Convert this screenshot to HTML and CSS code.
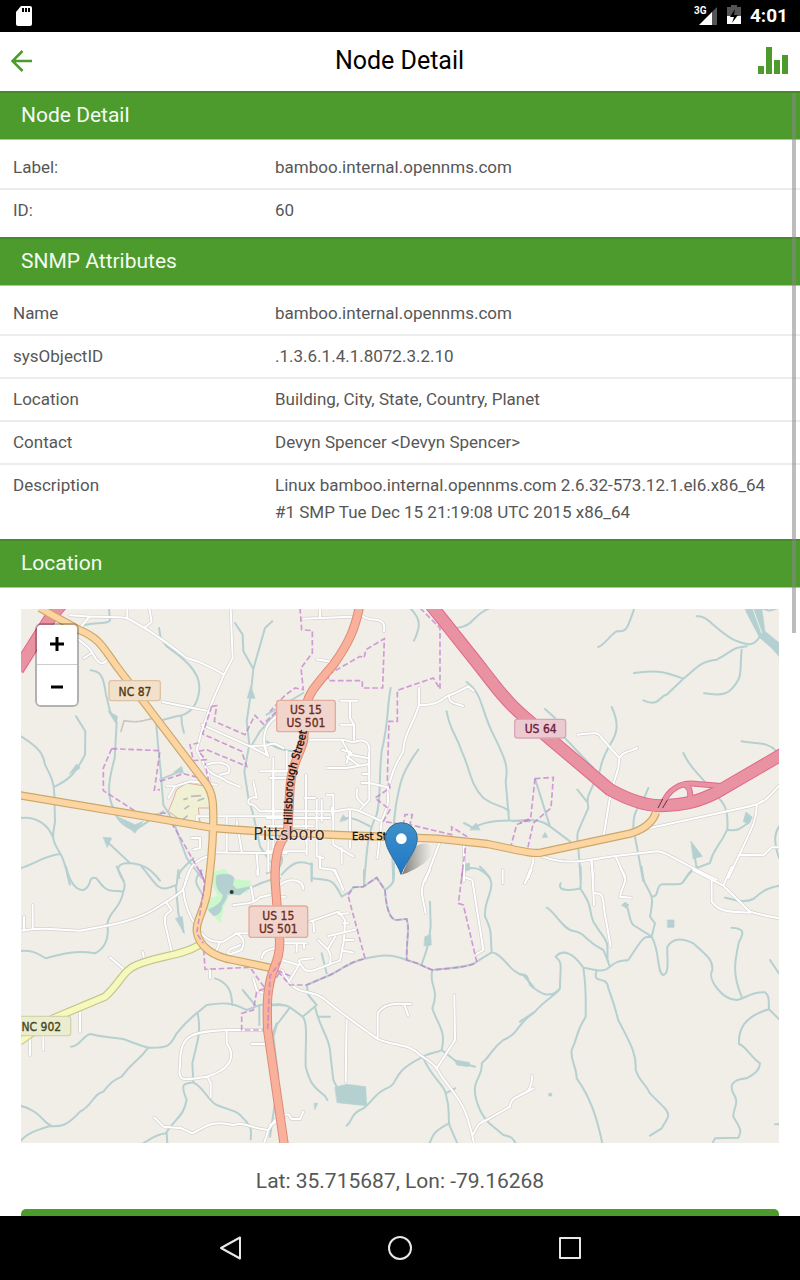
FILE: index.html
```html
<!DOCTYPE html>
<html lang="en">
<head>
<meta charset="utf-8">
<meta name="viewport" content="width=device-width, initial-scale=1">
<title>Node Detail</title>
<link rel="stylesheet" href="styles.css">
</head>
<body>
<div class="status-bar">
  <svg class="sd-card" viewBox="0 0 16 20" width="16" height="20" aria-hidden="true"><path fill="#fff" d="M5 0H14Q16 0 16 2V18Q16 20 14 20H2Q0 20 0 18V6Z"/><path d="M6 2h2v4H6zM9 2h2v4H9zM12 2h2v4h-2z"/></svg>
  <div class="status-icons">
    <svg viewBox="0 0 24 20" width="24" height="20" aria-hidden="true"><path fill="#fff" d="M5 20 18 7V20Z"/><path fill="#555" d="M18 7 23 2V20H18Z"/><text class="net" x="0" y="9">3G</text></svg>
    <svg viewBox="0 0 14 20" width="14" height="20" aria-hidden="true"><path fill="#555" d="M4 0H10V2H14V11H0V2H4Z"/><path fill="#fff" d="M0 11H14V19H0Z"/><path d="M8 4 3 12H7L5 18 11 10H7Z"/></svg>
    <span class="clock">4:01</span>
  </div>
</div>

<header class="toolbar">
  <button class="icon-button" aria-label="Back"><svg viewBox="0 0 22 22" width="22" height="22"><path fill="none" stroke="#4d9b2d" stroke-width="2.6" d="M21 11H2.500M11.500 1 1.500 11 11.500 21"/></svg></button>
  <h1>Node Detail</h1>
  <button class="icon-button" aria-label="Graphs"><svg viewBox="0 0 30 27" width="30" height="27"><path fill="#4d9b2d" d="M0 19h6v8H0zM8 0h6v27H8zM16 13h6v14h-6zM24 8h6v19h-6z"/></svg></button>
</header>

<main class="content">
  <section>
    <h2>Node Detail</h2>
    <table>
      <tr><th scope="row">Label:</th><td>bamboo.internal.opennms.com</td></tr>
      <tr><th scope="row">ID:</th><td>60</td></tr>
    </table>
  </section>
  <section>
    <h2>SNMP Attributes</h2>
    <table>
      <tr><th scope="row">Name</th><td>bamboo.internal.opennms.com</td></tr>
      <tr><th scope="row">sysObjectID</th><td>.1.3.6.1.4.1.8072.3.2.10</td></tr>
      <tr><th scope="row">Location</th><td>Building, City, State, Country, Planet</td></tr>
      <tr><th scope="row">Contact</th><td>Devyn Spencer &lt;Devyn Spencer&gt;</td></tr>
      <tr><th scope="row">Description</th><td>Linux bamboo.internal.opennms.com 2.6.32-573.12.1.el6.x86_64 #1 SMP Tue Dec 15 21:19:08 UTC 2015 x86_64</td></tr>
    </table>
  </section>
  <section>
    <h2>Location</h2>
    <div class="location">
      <div class="map">
        <svg class="map-canvas" viewBox="0 0 2274 1602" role="img" aria-label="Map of Pittsboro">
          <defs>
            <g id="minor">
              <g transform="translate(-3 -3)">
                <path d="M150 22C250 30 280 25 320 30C380 60 430 95 500 150C540 160 570 175 612 200L638 150 632 0M612 200 575 285 545 370 530 425C560 480 570 500 570 550M180 60 205 30M322 30V0M372 60 395 42 388 0M175 95C210 120 215 130 220 140C240 175 250 170 268 150M215 135 192 150M428 282 560 308"/>
                <path d="M545 350 690 415C720 430 740 440 745 445L735 415C760 400 770 410 790 420M690 415 735 412M560 470C600 455 640 470 625 495L600 500M560 480C580 510 600 500 620 520L660 537M440 535H465L510 520 590 530M465 535 445 570M530 650V625H800M620 625V730M650 640 665 730M580 733 710 735 715 800M710 735H800M745 700V790M580 740C520 755 505 780 495 830M515 690H540V720L520 725M700 520 710 570C690 560 670 590 700 590L720 610H800M720 490H800M760 490V625M780 320C740 340 720 380 740 440"/>
              </g>
              <g transform="translate(747 -3)">
                <path d="M100 32 150 30 280 25C300 45 350 20 342 70M150 30V0M140 154 185 162M212 278H262M240 278V330L252 350V395M212 350H250M120 395H215C240 395 240 410 265 398C300 395 300 420 297 440L298 575 270 605M215 395 240 440 292 450M215 425 245 435M230 465 240 430 M230 445 270 475M172 480H230L298 468M278 498H298M275 525H298L350 537M262 543C255 570 265 575 280 590"/>
                <path d="M447 240V290C430 350 400 380 400 430C370 480 365 500 352 550C360 590 345 610 335 640L322 750M447 292C500 290 510 280 530 265C560 255 575 245 595 235L610 248M537 262C535 290 560 285 580 295M-10 610H200C250 595 260 605 335 640M-10 630H180M0 490H70M0 510H60M50 430V490M10 450V730M108 500V700M105 570H135M140 575V745L160 750M170 560H190V710L250 745M215 720V765M185 600 190 640M-10 655H130M-10 730H110M110 690V740M240 610V720M150 745V780L190 785 210 820M155 575V640M510 700 465 820M582 700V820"/>
              </g>
              <g transform="translate(1497 -3)">
                <path d="M172 380C220 375 235 370 245 390L298 450 295 480 272 555 250 690M298 450C310 430 320 435 352 420M380 662 690 595C740 585 755 555 790 520M710 590C712 640 690 670 625 810M655 740 730 742 755 718H790M40 740V760L25 810M65 745C150 775 200 755 280 745L410 730C440 730 470 760 590 815M213 755 220 810M287 745 315 810"/>
              </g>
              <g transform="translate(-3 783)">
                <path d="M0 182C80 170 100 180 180 182C280 165 350 150 400 120C470 75 490 70 495 40L510 0M12 140V182M38 105V178M490 60C495 120 520 160 545 190C570 220 590 215 610 215L650 190C680 210 670 225 665 240L625 255C620 230 650 235 660 225M590 240 600 215M645 190H700M437 95 455 120C430 140 435 140 435 160L455 245M270 262 312 298M368 245 372 265M180 425V485M30 500V555M70 500V540M735 480H620C500 485 480 500 480 590C470 640 500 630 560 620C630 600 650 560 620 520V480M562 620 572 640V682M403 743 430 770 485 775 517 790C560 770 570 750 640 765C680 755 690 775 745 780L765 750M745 780 732 820M570 300V325M700 325 710 360 730 370M640 105C690 100 700 100 720 82L750 75M693 50 700 90M725 265C730 240 745 240 765 235M695 522H735M712 0V15"/>
              </g>
              <g transform="translate(747 783)">
                <path d="M30 45C60 20 100 30 100 58M20 80H45M195 0 220 60M120 155 205 125 225 150 222 210 210 272C150 290 130 310 105 300C70 260 90 270 130 265M35 270 85 285M90 280 60 330M40 220H110M80 220V245M102 220V235M205 132 235 130M220 160H235M175 198 260 178M145 210C160 230 190 240 180 280M175 235 195 200M222 210H250M220 242 250 248M130 155 132 185"/>
                <path d="M35 300 60 340C90 375 130 360 160 385C200 420 230 440 320 505C370 530 420 520 450 555C490 580 500 590 515 620C570 690 590 710 612 820M230 450 227 635M323 500V430C340 400 380 400 402 402H423M402 402 415 437M553 375 555 510 502 592M608 795C625 770 620 760 650 750L720 710C720 680 750 680 790 655M480 0C440 60 460 80 467 130M580 20 607 30 640 240 620 252M698 0V40M780 0 765 40M0 765 20 755M38 735 55 733 65 747H90L100 725"/>
              </g>
              <g transform="translate(1497 783)">
                <path d="M215-30 222 105M222 70C260 65 245 100 258 150L272 230M300-10C330 40 310 30 300 80L333 83M520 0 610 47 690 125C740 140 760 140 800 150M610 47 635-10M575 30V95C600 130 640 125 690 128M35 0 15 40M0 675C30 665 35 650 37 617"/>
              </g>
            </g>
            <g id="trunk"><path d="M57-3C107 27 127 35 172 62C237 87 247 117 287 172L557 527C577 557 577 587 577 637C575 717 570 780 557 860C540 930 527 930 527 965C532 1013 577 1043 637 1053L755 1078M-10 558 360 620 577 657C700 668 760 668 950 678L1250 689 1400 705C1500 725 1530 735 1560 731L1830 673C1870 660 1895 640 1905 610"/></g>
            <path id="primary" d="M1015-5C1002 57 987 97 937 167C877 237 862 257 857 287L847 397C832 447 812 467 807 537L800 670C775 700 762 730 762 810L775 983C782 1053 750 1080 745 1130Q736 1163 740 1263C757 1383 772 1483 790 1610"/>
            <path id="motorway" d="M1208-40 1237-3 1367 160C1420 228 1450 270 1500 315L1587 390 1767 542C1827 575 1877 590 1917 590C1997 588 2037 575 2087 550L2290 432M-10 182 92 20 135-30M60-20 105 25"/>
            <path id="ramp" d="M1923 590C1940 540 1980 518 2030 525L2110 532M1985 525C2005 530 2010 545 2007 570"/>
            <path id="secondary" d="M-5 1298 97 1228 252 1163C297 1123 307 1083 347 1068C417 1038 477 1043 535 1008"/>
            <path id="street-name" d="M812 647 815 537C820 487 835 447 845 417L862 350"/>
            <linearGradient id="pin" x2="0" y2="1"><stop stop-color="#4091c8"/><stop offset="1" stop-color="#1f76c6"/></linearGradient>
            <linearGradient id="shade"><stop stop-color="#444" stop-opacity=".7"/><stop offset="1" stop-color="#777" stop-opacity="0"/></linearGradient>
          </defs>
          <rect width="2274" height="1602" fill="#f1eee8"/>
          <path class="park" d="M570 790 610 780 640 810 690 815 680 850 625 860 610 890 598 943 575 915 550 895 560 870 590 860 575 830Z"/>
          <path class="school" d="M467 542 497 522 557 532 572 597 532 597 537 640 477 632 442 607 455 575Z"/>
          <path class="school-path" d="M487 572 500 568M510 562 540 560M490 600 505 590M500 620 485 632M530 575 550 568"/>
          <g class="water">
            <g transform="translate(-3 -3)">
              <path d="M190 52C240 40 260 50 270 38L267 0M417 60 422 90 440 115C490 150 540 190 538 240C536 290 510 320 470 325L430 335M484 325 486 350 492 374M645 45 668 80 670 130 700 183 735 60 757 40M700 183 692 260 680 340 688 410 673 490 685 570 700 620 720 715 750 760M790 290 720 370 695 412M212 187C240 190 250 200 258 260L270 310 290 345 284 450C265 520 260 560 280 600C290 640 320 660 345 665C360 660 380 640 430 610M408 340 415 420 422 490 430 590 460 640 500 750 545 810M420 515 480 490M168 325 196 370 195 440C170 490 150 515 105 535M3 385C60 420 70 440 75 470C90 500 103 520 103 560L105 640C100 680 90 690 120 735C140 770 140 800 150 830M3 630C50 625 85 650 100 690M3 780C40 770 80 740 120 738M260 700 330 765C370 770 390 780 420 818M330 765C290 765 285 780 310 818M520 750C490 780 470 795 478 810"/>
              <path class="pond" d="M682 270 692 235 705 270ZM265 310 292 325 290 348ZM148 498 170 468 180 480ZM290 625 345 650 370 640 345 675ZM250 688 275 690 262 718ZM462 492 485 475 490 495Z"/>
              <path class="track" d="M303 370 312 338C350 345 360 340 395 332"/>
            </g>
            <g transform="translate(747 -3)">
              <path d="M420 0C450 30 455 50 432 98M560 60C620 50 600 25 660 0M362 240C350 300 358 330 335 430C325 520 335 560 320 620C290 680 290 740 282 830M445 425C390 500 390 530 378 590L365 700 370 820M530 310C540 370 560 380 575 430C600 480 600 530 640 570C680 600 700 590 717 610M590 222C640 260 630 300 670 380C710 460 715 480 707 520L717 635M582 645 610 660C650 635 700 635 780 640M-10 320 100 255M-10 400C30 430 60 430 90 430M215 632C250 625 270 640 300 655M35 800C70 760 90 755 125 770V820M580 785C620 770 640 790 660 810"/>
              <path class="pond" d="M600 665 618 645 630 665ZM210 640 220 620 230 635ZM580 770 598 765 600 785 585 790Z"/>
            </g>
            <g transform="translate(1497 -3)">
              <path d="M345-5C320 70 320 70 290 70C270 80 260 105 235 117M530 25C560 20 580 60 640 95C680 110 700 120 720 85L680 10M680 115C630 120 640 130 590 155C540 160 530 180 490 212L440 260C420 260 420 300 370 277M490 212C430 190 400 185 342 195M665 125C660 170 665 200 655 215C630 260 610 265 552 256M275 297C300 350 290 380 270 410C230 480 250 480 230 510C200 570 200 570 205 600C165 690 170 670 175 720L182 810M75 303 105 330M130 385 220 480M172 545 200 580M385 540C365 600 340 590 340 660L370 820M490 435C510 480 530 490 555 522M590 565C620 590 625 620 622 665C590 730 580 720 570 765L530 780C510 785 505 800 490 820M622 665C650 670 660 665 690 640M665 400C720 410 740 400 770 430M45 512 90 655 150 700M-20 640C50 630 70 640 90 655M530 780 520 720M790 640C760 670 760 700 777 750M720 0 750 8 775 0"/>
              <path class="pond" d="M675 0H725L735 70 790 115V160L755 120 720 90ZM513 700 547 745 520 752ZM670 640 678 612 697 628 685 648ZM67 688 75 673 83 687Z"/>
              <path d="M700 5 725 75" class="gap"/>
            </g>
            <g transform="translate(-3 783)">
              <path d="M138-10C150 40 170 60 190 60C220 50 200 15 230 25C260 70 270 60 310 65C320 40 310 30 290-10M310 65C300 120 270 120 262 160C270 220 245 240 225 250C170 240 130 250 78 265C50 250 40 240 0 243M365-10C400 30 410 60 440 55L470 45 475 0M468 50 475 130 490 185M153 530C180 530 185 500 210 492C260 505 270 500 310 507C370 530 370 530 385 533C450 535 450 525 470 490C510 440 520 440 560 405C620 395 640 400 680 420L720 405 780 403M385 533C350 580 340 570 305 620C280 630 270 640 250 665C220 670 215 710 180 725C140 770 120 770 90 768C50 780 20 790 0 815M0 707C60 720 70 760 95 768M533 430C545 490 530 520 517 580L520 635M370 820C400 800 420 790 440 790L442 820M437 790C470 740 490 740 500 690C480 640 490 640 520 637C560 660 560 690 590 705C640 725 650 720 670 745C695 770 695 780 692 808M585 325C630 340 635 370 637 405M668 360 705 405M718 408V465M545 0C510 40 540 50 550 80M660 60C700 60 720 30 780 25M770 460 755 500 772 650 750 800"/>
              <path class="pond" d="M590 18C600 10 640 10 642 25L638 45 650 58 690 50 660 75 620 72C625 90 600 105 605 115C600 135 585 137 580 137L565 120C580 110 605 105 610 75C590 60 585 40 590 18ZM467 145 487 140 493 190Z"/>
            </g>
            <g transform="translate(747 783)">
              <path d="M-10 10C30 0 40-20 35-40M125-20V25C190 30 190 30 215 80L240 65 250 52 280 50 320 23 345 60C380 35 370 30 372-20M282 0V45M345 60C350 140 370 150 380 150L410 147C420 180 410 190 410 270C450 280 460 290 487 300C540 295 610 290 620 275L665 247C700 250 720 310 760 315L790 350M410 270C360 250 330 255 280 267C230 280 230 290 180 315L110 345 115 375 140 405 98 440 60 412C40 400 20 405 0 407M60 412 20 465 10 500 25 620M98 440C115 460 105 520 107 590C120 640 130 650 165 678L172 690M135 410C150 480 180 500 182 560L190 630 200 650M145 440H180M155 250 170 310M480 95 482 170C475 230 470 240 455 283M487 300C475 350 510 350 487 415C500 460 530 480 515 540C500 550 480 545 450 565C360 610 390 640 350 655C310 670 300 710 270 720C240 735 250 750 230 767M515 540 560 575 615 590M460 565C490 630 520 640 527 670C545 730 530 750 540 770L562 820M537 760C480 790 490 800 478 820M527 670 555 655M630-10C700 50 640 70 645 140C670 190 660 200 665 247M790 430C740 460 750 490 700 510C660 540 670 550 635 580C640 630 590 630 630 720C650 760 660 760 700 795C730 800 730 810 737 820"/>
              <path class="pond" d="M195 652 230 643 287 650 290 707 202 698ZM465 200 482 193 484 225 463 228ZM555 570 600 578 595 590 560 585ZM133 700 143 700 135 718Z"/>
            </g>
            <g transform="translate(1497 783)">
              <path d="M182-10V55C155 62 110 65 122 40M180 55C220 110 205 120 220 155C260 220 265 200 262 270L270 290C250 310 230 300 190 293C160 250 130 235 107 260C130 280 120 290 120 355C90 390 60 370 30 345C20 310 20 315 0 313M120 355C110 375 80 385 45 425L0 455M80 113C100 120 130 180 160 183C200 190 190 210 250 240L265 275M270 290C300 265 310 275 325 270C370 200 370 200 395 200L405 160 390 140C400 90 395 95 395 80C380 40 370 50 365-10M520 0C490 20 500 43 470 43H425C405 50 420 80 395 80M317 105C330 120 325 150 340 165L395 200C420 240 410 310 430 315C450 310 440 260 442 230C460 200 490 205 520 220C560 255 580 270 577 300C560 330 610 390 650 390C680 385 690 365 735 367C750 380 745 390 747 418L780 450M747 418C670 440 655 480 657 522C680 530 690 560 720 580C720 605 690 620 680 625C630 630 630 650 640 670C660 700 640 710 640 740C665 780 665 785 655 803L585 805 575 825M635 173C670 175 675 185 657 215C645 270 635 310 665 380M750 270 780 315M190 293C200 360 197 400 197 440C165 490 175 500 155 540C150 570 170 590 170 625C210 680 230 740 247 820M230 300C215 350 260 310 265 355C300 450 290 450 300 460C330 520 350 550 347 600C360 640 370 630 390 670L435 715C455 740 440 745 425 775L390 797M615 83C650 90 670 100 700 87C730 60 750 50 790 45M765 763H790"/>
              <path class="pond" d="M443 150H462V172H443ZM305 105 315 97 327 105 318 113ZM87 670H95V678H87Z"/>
            </g>
          </g>
          <use href="#minor" class="minor-case"/><use href="#minor" class="minor-fill"/>
          <g class="boundary">
            <g transform="translate(-3 -3)"><path d="M575 295 590 293 583 340 675 380 705 322 730 348 790 290M575 295 560 340 548 378 665 430 680 475 560 425 535 430 558 455 520 458 510 410 535 405M275 422 420 428 403 547 420 545M275 422 250 480V548L370 625 435 615 470 670 550 810M420 520 490 497 540 510 575 560 555 465"/></g>
            <g transform="translate(747 -3)"><path d="M90 0 95 65 127 68V135L93 180 100 245 75 240 45 262 0 310M175 200 270 145 282 150 288 125 343 92 338 240H277V218H175ZM450 0 510 60V243L490 210 382 247V340H357L352 515 360 540 315 570 360 605 340 640 400 650 405 620 427 620 420 650 545 680V657L590 685 575 810M780 635 740 650 720 725 770 735"/></g>
            <g transform="translate(1497 -3)"><path d="M45 512 100 508 93 600 40 645 20 735M45 512 32 630 0 645"/></g>
            <g transform="translate(-3 783)"><path d="M540 0 555 40 530 190 550 220 555 298 690 292 735 355 710 365 700 420 665 430V480H735L740 370 780 305"/></g>
            <g transform="translate(747 783)"><path d="M235 80 285 265M235 75 250 52 280 50 320 23 345 60C350 140 370 150 380 150L410 147C420 180 410 190 410 270C450 280 460 290 487 300C540 295 610 290 620 275L580 105 565 100 578 0M280 267C230 280 230 290 180 315L110 345 60 345 20 300 65 320"/></g>
          </g>
          <use href="#secondary" class="secondary-case"/><use href="#secondary" class="secondary-fill"/>
          <use href="#ramp" class="ramp-case"/><use href="#motorway" class="motorway-case"/>
          <use href="#ramp" class="ramp-fill"/><use href="#motorway" class="motorway-fill"/>
          <use href="#trunk" class="trunk-case"/><use href="#trunk" class="trunk-fill"/>
          <use href="#primary" class="primary-case"/><use href="#primary" class="primary-fill"/>
          <path class="boundary" d="M537 783 552 823 527 973 547 1003M740 1260 747 1100 777 1060"/>
          <path class="bridge" d="M1911 597 1925 570M1925 597 1939 573"/>
          <circle cx="632" cy="849" r="6" fill="#333"/>
          <g class="shield orange"><rect x="264" y="215" width="154" height="60" rx="8"/><text x="342" y="260">NC 87</text></g>
          <g class="shield red"><rect x="767" y="274" width="176" height="94" rx="8"/><text x="855" y="315">US 15</text><text x="855" y="354">US 501</text></g>
          <g class="shield red"><rect x="684" y="891" width="176" height="94" rx="8"/><text x="772" y="932">US 15</text><text x="772" y="971">US 501</text></g>
          <g class="shield pink"><rect x="1481" y="331" width="153" height="56" rx="8"/><text x="1559" y="372">US 64</text></g>
          <g class="shield lime"><rect x="-20" y="1222" width="169" height="58" rx="8"/><text x="61" y="1265">NC 902</text></g>
          <text class="town" x="697" y="693">Pittsboro</text>
          <text class="street" x="993" y="692">East Str</text>
          <text class="street"><textPath href="#street-name">Hillsborough Street</textPath></text>
          <path fill="url(#shade)" d="M1143 797 1172 725C1190 695 1235 700 1235 720C1235 755 1180 785 1143 797Z"/>
          <path fill="url(#pin)" stroke="#2e6c97" stroke-width="3" d="M1140 796C1128 758 1093 725 1093 688A48 47 0 0 1 1189 688C1189 725 1152 758 1140 796Z"/>
          <circle cx="1141" cy="689" r="16" fill="#fff"/>
        </svg>
        <div class="zoom">
          <button aria-label="Zoom in"><svg viewBox="0 0 16 16" width="16" height="16"><path d="M1 7H15M8 0V14"/></svg></button>
          <button aria-label="Zoom out"><svg viewBox="0 0 16 16" width="16" height="16"><path d="M2 10H14"/></svg></button>
        </div>
      </div>
      <p class="coords">Lat: 35.715687, Lon: -79.16268</p>
      <button class="action" aria-label="Update location"></button>
    </div>
  </section>
  <div class="scroll-thumb"></div>
</main>

<nav class="nav-bar">
  <button aria-label="Back"><svg viewBox="0 0 24 24" width="24" height="24"><path d="M22 1.500V22.500L3 12Z"/></svg></button>
  <button aria-label="Home"><svg viewBox="0 0 24 24" width="24" height="24"><circle cx="12" cy="12" r="11"/></svg></button>
  <button aria-label="Recent apps"><svg viewBox="0 0 24 24" width="24" height="24"><path d="M2 2H22V22H2Z"/></svg></button>
</nav>
</body>
</html>
```
FILE: styles.css
```css
* { box-sizing: border-box; }
body {
  margin: 0;
  height: 100vh;
  display: flex;
  flex-direction: column;
  overflow: hidden;
  background: #fff;
  color: #575757;
  font-family: Roboto, sans-serif;
}
button { padding: 0; border: 0; background: none; display: flex; align-items: center; justify-content: center; }
.status-bar {
  flex: none;
  height: 32px;
  padding: 0 12px 0 16px;
  display: flex;
  align-items: center;
  justify-content: space-between;
  background: #000;
  color: #fff;
}
.status-icons { display: flex; align-items: center; gap: 9px; }
.status-icons svg { margin-bottom: 2px; }
.net { font-size: 10px; font-weight: 700; fill: #fff; }
.clock { font-size: 19px; font-weight: 700; line-height: 32px; }
.toolbar {
  flex: none;
  height: 59px;
  padding: 0 12px 2px 11px;
  display: grid;
  grid-template-columns: 1fr auto 1fr;
  align-items: center;
}
.icon-button:last-child { justify-self: end; }
.icon-button:first-child { justify-self: start; }
h1 { margin: 0; font-size: 25px; line-height: 56px; font-weight: 400; color: #000; }
.content { position: relative; flex: 1; min-height: 0; overflow: hidden; }
h2 {
  margin: 0;
  padding: 0 21px 2px;
  border-top: 2px solid #458b29;
  border-bottom: 1px solid #a9cd9a;
  background: #4d9b2d;
  color: #f4faf2;
  font-size: 21px;
  line-height: 44px;
  font-weight: 400;
}
table { width: 100%; border-collapse: separate; border-spacing: 0; padding: 7px 0 6px; table-layout: fixed; }
th, td {
  padding: 7px 11px;
  border-bottom: 2px solid #ededed;
  vertical-align: top;
  text-align: left;
  font-size: 17px;
  line-height: 27px;
  font-weight: 400;
}
th { width: 33%; padding-left: 13px; }
tr:last-child > * { border-bottom: 0; }
.location { padding: 21px; }
.map { position: relative; }
.map-canvas { display: block; width: 100%; height: auto; }
.coords { margin: 0; padding: 24px 0 14px; text-align: center; font-size: 21px; line-height: 28px; }
.action { width: 100%; height: 48px; border-radius: 5px; background: #4d9b2d; }
.scroll-thumb { position: absolute; top: 2px; right: 4px; width: 4px; height: 48%; background: rgba(135, 135, 135, .55); }
.zoom { position: absolute; top: 14px; left: 14px; border: 2px solid rgba(0, 0, 0, .25); border-radius: 6px; background-clip: padding-box; }
.zoom button { width: 40px; height: 40px; background: #fff; border-radius: 0 0 4px 4px; }
.zoom button:first-child { border-bottom: 1px solid #ccc; border-radius: 4px 4px 0 0; }
.zoom path { fill: none; stroke: #000; stroke-width: 3; }
.nav-bar { flex: none; height: 64px; display: flex; justify-content: center; align-items: center; gap: 122px; background: #000; }
.nav-bar button { width: 48px; height: 48px; }
.nav-bar svg { fill: none; stroke: #e8e8e8; stroke-width: 2; stroke-linejoin: round; }

.water { fill: none; stroke: #b5d0d0; stroke-width: 6; stroke-linejoin: round; stroke-linecap: round; }
.pond { fill: #b5d0d0; stroke-width: 2; }
.track { stroke: #c9c7c4; stroke-width: 5; }
.gap { stroke: #f1eee8; stroke-width: 3; }
.park { fill: #caf8ca; }
.school { fill: #f0f0d5; stroke: #dfb0a0; stroke-width: 3; }
.school-path { fill: none; stroke: #bbb; stroke-width: 5; }
.minor-case, .minor-fill { fill: none; stroke-linejoin: round; stroke-linecap: round; }
.minor-case { stroke: #d3d1cf; stroke-width: 10; }
.minor-fill { stroke: #fff; stroke-width: 6; }
.boundary { fill: none; stroke: #c47fcd; stroke-opacity: .75; stroke-width: 5; stroke-dasharray: 17 8; }
.secondary-case, .secondary-fill, .trunk-case, .trunk-fill, .primary-case, .primary-fill, .motorway-case, .motorway-fill, .ramp-case, .ramp-fill { fill: none; stroke-linejoin: round; }
.secondary-case { stroke: #c3c58e; stroke-width: 25; }
.secondary-fill { stroke: #f6f9bb; stroke-width: 18; }
.trunk-case { stroke: #cba869; stroke-width: 25; }
.trunk-fill { stroke: #fdd5a2; stroke-width: 18; }
.primary-case { stroke: #dd8a75; stroke-width: 28; }
.primary-fill { stroke: #f9b19b; stroke-width: 22; }
.motorway-case { stroke: #e0688c; stroke-width: 39; }
.motorway-fill { stroke: #e892a2; stroke-width: 33; }
.ramp-case { stroke: #e0688c; stroke-width: 18; }
.ramp-fill { stroke: #e892a2; stroke-width: 12; }
.bridge { stroke: #5f3744; stroke-width: 3; }
.shield rect { stroke-width: 4; }
.shield text { text-anchor: middle; font-family: "DejaVu Sans Condensed", "DejaVu Sans", sans-serif; font-size: 36px; stroke-width: 1; }
.orange rect { fill: #f3e0cb; stroke: #dcc3a4; }
.orange text { fill: #503814; stroke: #503814; }
.red rect { fill: #f1d4cc; stroke: #e4ab9b; }
.red text { fill: #6b2c20; stroke: #6b2c20; }
.pink rect { fill: #eccad2; stroke: #dda5b3; }
.pink text { fill: #6b1c39; stroke: #6b1c39; }
.lime rect { fill: #ebecd0; stroke: #d2d4a9; }
.lime text { fill: #45471f; stroke: #45471f; }
.town, .street { font-family: "DejaVu Sans Condensed", "DejaVu Sans", sans-serif; }
.town { font-size: 54px; fill: #333; stroke: #fff; stroke-opacity: .5; stroke-width: 5; paint-order: stroke; }
.street { font-size: 33px; fill: #111; stroke: #111; stroke-width: 1; }
```
